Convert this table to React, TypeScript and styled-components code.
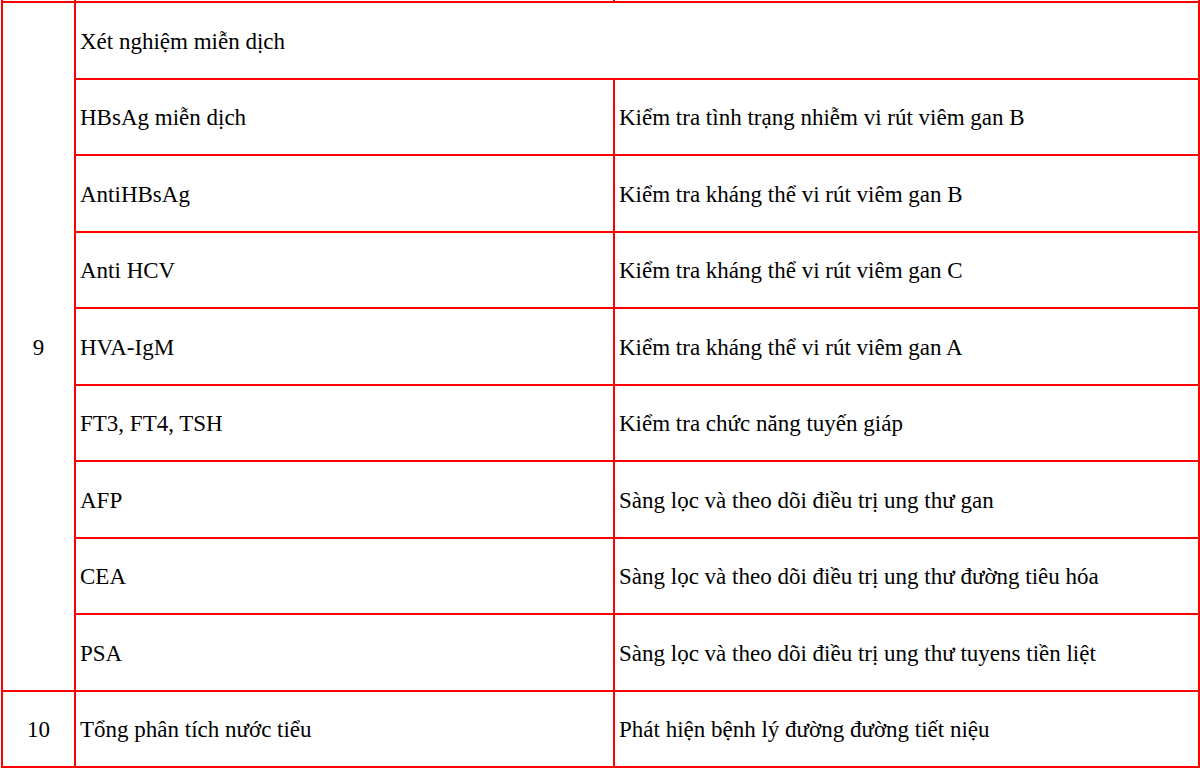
import React from 'react';
import styled, { createGlobalStyle } from 'styled-components';

const GlobalStyle = createGlobalStyle`
    html, body {
        margin: 0;
        padding: 0;
        background: #FFFFFF;
        overflow: hidden;
    }
`;

const Page = styled.div`
    width: 1200px;
    height: 769px;
    overflow: hidden;
`;
const Table = styled.table`
    width: 1199px;
    margin: -30px 0 0 1px;
    border-collapse: collapse;
    table-layout: fixed;
    font-family: "Liberation Serif", "Times New Roman", "DejaVu Serif", serif;
    font-size: 23px;
    color: #000000;
`;
const Row = styled.tr<{h?: number}>`
    height: ${p => p.h ?? 76.5}px;
`;
const Cell = styled.td<{center?: boolean}>`
    border: 2px solid #FF0000;
    padding: 3px 4px 0 4px;
    font-family: "Liberation Serif", "Times New Roman", "DejaVu Serif", serif;
    text-align: ${p => p.center ? 'center' : 'left'};
    vertical-align: middle;
    white-space: nowrap;
`;

interface item {
    name: string,
    purpose: string,
}
const immuneTests: item[] = [
    { name: 'HBsAg miễn dịch', purpose: 'Kiểm tra tình trạng nhiễm vi rút viêm gan B' },
    { name: 'AntiHBsAg', purpose: 'Kiểm tra kháng thể vi rút viêm gan B' },
    { name: 'Anti HCV', purpose: 'Kiểm tra kháng thể vi rút viêm gan C' },
    { name: 'HVA-IgM', purpose: 'Kiểm tra kháng thể vi rút viêm gan A' },
    { name: 'FT3, FT4, TSH', purpose: 'Kiểm tra chức năng tuyến giáp' },
    { name: 'AFP', purpose: 'Sàng lọc và theo dõi điều trị ung thư gan' },
    { name: 'CEA', purpose: 'Sàng lọc và theo dõi điều trị ung thư đường tiêu hóa' },
    { name: 'PSA', purpose: 'Sàng lọc và theo dõi điều trị ung thư tuyens tiền liệt' },
];

const App = () => {
    return (
        <Page>
            <GlobalStyle />
            <Table>
                <colgroup>
                    <col style={{ width: 73 }} />
                    <col style={{ width: 539 }} />
                    <col />
                </colgroup>
                <tbody>
                    <Row h={31}>
                        <Cell />
                        <Cell />
                        <Cell />
                    </Row>
                    <Row>
                        <Cell center rowSpan={9}>9</Cell>
                        <Cell colSpan={2}>Xét nghiệm miễn dịch</Cell>
                    </Row>
                    {immuneTests.map(t => (
                        <Row key={t.name}>
                            <Cell>{t.name}</Cell>
                            <Cell>{t.purpose}</Cell>
                        </Row>
                    ))}
                    <Row>
                        <Cell center>10</Cell>
                        <Cell>Tổng phân tích nước tiểu</Cell>
                        <Cell>Phát hiện bệnh lý đường đường tiết niệu</Cell>
                    </Row>
                </tbody>
            </Table>
        </Page>
    );
}
export default App;
